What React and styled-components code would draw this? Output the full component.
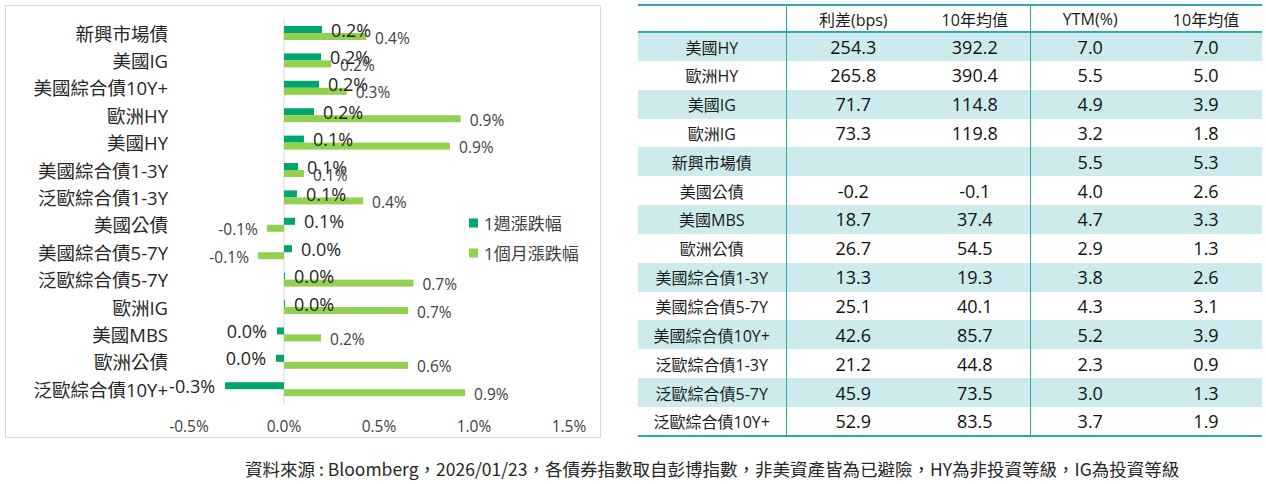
import React from "react";
import styled, { createGlobalStyle } from "styled-components";

const GlobalStyle = createGlobalStyle`
  body {
    margin: 0;
    background: #ffffff;
    font-family: "Open Sans", "Noto Sans CJK TC", sans-serif;
    color: #1a1a1a;
  }
`;

const WEEK = "#00a66b";
const MONTH = "#92d050";
const TEAL = "#27abab";

// x of 0% on the chart, px per 1%
const ZERO = 284;
const SCALE = 190;

const chartRows = [
  { name: "新興市場債", w: 0.2, wl: "0.2%", m: 0.432, ml: "0.4%" },
  { name: "美國IG", w: 0.195, wl: "0.2%", m: 0.248, ml: "0.2%" },
  { name: "美國綜合債10Y+", w: 0.184, wl: "0.2%", m: 0.33, ml: "0.3%" },
  { name: "歐洲HY", w: 0.158, wl: "0.2%", m: 0.93, ml: "0.9%" },
  { name: "美國HY", w: 0.105, wl: "0.1%", m: 0.874, ml: "0.9%" },
  { name: "美國綜合債1-3Y", w: 0.074, wl: "0.1%", m: 0.105, ml: "0.1%" },
  { name: "泛歐綜合債1-3Y", w: 0.068, wl: "0.1%", m: 0.416, ml: "0.4%" },
  { name: "美國公債", w: 0.058, wl: "0.1%", m: -0.09, ml: "-0.1%" },
  { name: "美國綜合債5-7Y", w: 0.042, wl: "0.0%", m: -0.137, ml: "-0.1%" },
  { name: "泛歐綜合債5-7Y", w: 0.005, wl: "0.0%", m: 0.681, ml: "0.7%" },
  { name: "歐洲IG", w: 0.005, wl: "0.0%", m: 0.653, ml: "0.7%" },
  { name: "美國MBS", w: -0.037, wl: "0.0%", m: 0.195, ml: "0.2%" },
  { name: "歐洲公債", w: -0.042, wl: "0.0%", m: 0.653, ml: "0.6%" },
  { name: "泛歐綜合債10Y+", w: -0.31, wl: "-0.3%", m: 0.953, ml: "0.9%" },
];

const ticks = ["-0.5%", "0.0%", "0.5%", "1.0%", "1.5%"];

const tableRows = [
  ["美國HY", "254.3", "392.2", "7.0", "7.0"],
  ["歐洲HY", "265.8", "390.4", "5.5", "5.0"],
  ["美國IG", "71.7", "114.8", "4.9", "3.9"],
  ["歐洲IG", "73.3", "119.8", "3.2", "1.8"],
  ["新興市場債", "", "", "5.5", "5.3"],
  ["美國公債", "-0.2", "-0.1", "4.0", "2.6"],
  ["美國MBS", "18.7", "37.4", "4.7", "3.3"],
  ["歐洲公債", "26.7", "54.5", "2.9", "1.3"],
  ["美國綜合債1-3Y", "13.3", "19.3", "3.8", "2.6"],
  ["美國綜合債5-7Y", "25.1", "40.1", "4.3", "3.1"],
  ["美國綜合債10Y+", "42.6", "85.7", "5.2", "3.9"],
  ["泛歐綜合債1-3Y", "21.2", "44.8", "2.3", "0.9"],
  ["泛歐綜合債5-7Y", "45.9", "73.5", "3.0", "1.3"],
  ["泛歐綜合債10Y+", "52.9", "83.5", "3.7", "1.9"],
];

const Page = styled.div`
  padding: 4px 4px 0 5px;
`;

const TopRow = styled.div`
  display: flex;
  align-items: flex-start;
  gap: 37px;
`;

const ChartPanel = styled.div`
  box-sizing: border-box;
  width: 596px;
  height: 433px;
  margin-top: 1px;
  border: 1px solid #d9d9d9;
  flex-shrink: 0;
`;

const ChartSvg = styled.svg`
  display: block;
  font-family: "Open Sans", "Noto Sans CJK TC", sans-serif;
`;

const CategoryText = styled.text`
  font-size: 18.5px;
  fill: #262626;
`;

const WeekText = styled.text`
  font-size: 18px;
  font-weight: 500;
  fill: #1f1f1f;
`;

const MonthText = styled.text`
  font-size: 15.5px;
  fill: #404040;
`;

const TickText = styled.text`
  font-size: 15.5px;
  fill: #404040;
`;

const LegendText = styled.text`
  font-size: 17px;
  fill: #404040;
`;

const DataTable = styled.table`
  width: 624px;
  flex-shrink: 0;
  border-collapse: collapse;
  table-layout: fixed;
  border-top: 2px solid ${TEAL};
  border-bottom: 2px solid ${TEAL};
`;

const HeadCell = styled.th`
  height: 25px;
  padding: 0;
  font-weight: 400;
  font-size: 16px;
  color: #1a1a1a;
  text-align: center;
  white-space: nowrap;
  border-bottom: 2px solid ${TEAL};
  border-right: ${(p) => (p.$divider ? `1.5px solid ${TEAL}` : "none")};
`;

const BodyRow = styled.tr`
  height: 28.85px;
  background: ${(p) => (p.$shaded ? "#cdebec" : "#ffffff")};
`;

const NameCell = styled.td`
  padding: 0;
  font-size: 16px;
  text-align: center;
  white-space: nowrap;
  color: #1a1a1a;
  border-right: 1.5px solid ${TEAL};
`;

const ValueCell = styled.td`
  padding: 0;
  font-size: 18px;
  text-align: center;
  color: #111111;
  border-right: ${(p) => (p.$divider ? `1.5px solid ${TEAL}` : "none")};
`;

const Footer = styled.div`
  padding: 19px 0 0 240px;
  font-family: "Noto Sans CJK TC", sans-serif;
  font-size: 17.5px;
  line-height: 24px;
  color: #262626;
  white-space: nowrap;
`;

const rowY = (i) => 33 + i * 27.4;
const xOf = (v) => ZERO + v * SCALE;

function BarChart() {
  return (
    <ChartSvg width="594" height="431" viewBox="6 6 594 431">
      <line x1={ZERO} y1="19" x2={ZERO} y2="404" stroke="#d9d9d9" strokeWidth="1" />
      {chartRows.map((r, i) => {
        const yc = rowY(i);
        const we = xOf(r.w);
        const me = xOf(r.m);
        return (
          <g key={r.name}>
            <CategoryText x="168" y={yc} textAnchor="end" dominantBaseline="central">
              {r.name}
            </CategoryText>
            <rect x={Math.min(ZERO, we)} y={yc - 7} width={Math.max(Math.abs(we - ZERO), 1)} height="7" fill={WEEK} />
            <rect x={Math.min(ZERO, me)} y={yc} width={Math.abs(me - ZERO)} height="7" fill={MONTH} />
            <WeekText
              x={r.w < 0 ? we - 10 : we + 9}
              y={yc - 3.5}
              textAnchor={r.w < 0 ? "end" : "start"}
              dominantBaseline="central"
            >
              {r.wl}
            </WeekText>
            <MonthText
              x={r.m < 0 ? me - 9 : me + 9}
              y={yc + 4.5}
              textAnchor={r.m < 0 ? "end" : "start"}
              dominantBaseline="central"
            >
              {r.ml}
            </MonthText>
          </g>
        );
      })}
      {ticks.map((t, i) => (
        <TickText key={t} x={ZERO + (i - 1) * 95} y="426" textAnchor="middle" dominantBaseline="central">
          {t}
        </TickText>
      ))}
      <rect x="469" y="218.5" width="9" height="9" fill={WEEK} />
      <LegendText x="484" y="223" dominantBaseline="central">1週漲跌幅</LegendText>
      <rect x="469" y="248.5" width="9" height="9" fill={MONTH} />
      <LegendText x="484" y="253" dominantBaseline="central">1個月漲跌幅</LegendText>
    </ChartSvg>
  );
}

function SpreadTable() {
  return (
    <DataTable>
      <colgroup>
        <col style={{ width: 148 }} />
        <col style={{ width: 134 }} />
        <col style={{ width: 110 }} />
        <col style={{ width: 120 }} />
        <col style={{ width: 112 }} />
      </colgroup>
      <thead>
        <tr>
          <HeadCell $divider />
          <HeadCell>利差(bps)</HeadCell>
          <HeadCell $divider>10年均值</HeadCell>
          <HeadCell>YTM(%)</HeadCell>
          <HeadCell>10年均值</HeadCell>
        </tr>
      </thead>
      <tbody>
        {tableRows.map((r, i) => (
          <BodyRow key={r[0]} $shaded={i % 2 === 0}>
            <NameCell>{r[0]}</NameCell>
            <ValueCell>{r[1]}</ValueCell>
            <ValueCell $divider>{r[2]}</ValueCell>
            <ValueCell>{r[3]}</ValueCell>
            <ValueCell>{r[4]}</ValueCell>
          </BodyRow>
        ))}
      </tbody>
    </DataTable>
  );
}

export default function App() {
  return (
    <>
      <GlobalStyle />
      <Page>
        <TopRow>
          <ChartPanel>
            <BarChart />
          </ChartPanel>
          <SpreadTable />
        </TopRow>
        <Footer>
          資料來源 : Bloomberg，2026/01/23，各債券指數取自彭博指數，非美資產皆為已避險，HY為非投資等級，IG為投資等級
        </Footer>
      </Page>
    </>
  );
}
